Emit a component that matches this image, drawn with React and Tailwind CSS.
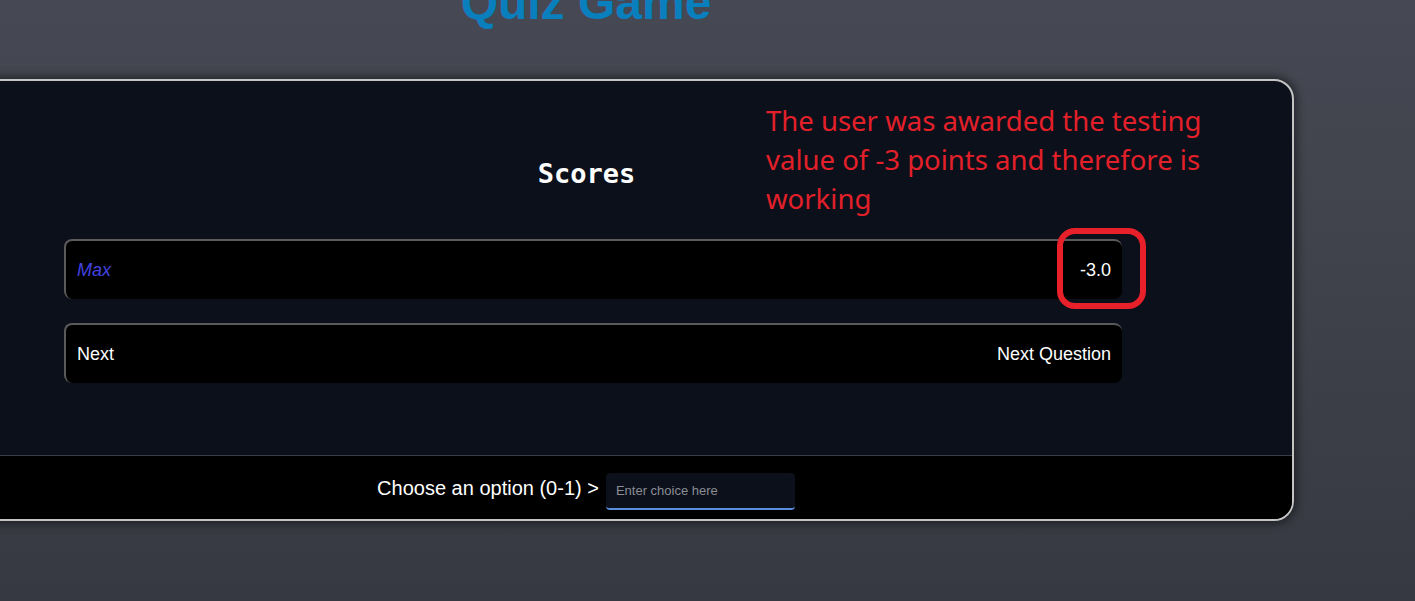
import React from 'react';

const App = () => {
    return (
        <div className="relative w-[1415px] h-[601px] overflow-hidden bg-gradient-to-b from-[#464953] to-[#373942]">
            {/* Title */}
            <h1 className="mt-[-21px] ml-[-122px] w-[1416px] text-center text-[48px] leading-[48px] font-bold text-[#0a7fbe] font-['Liberation_Sans',Arial,sans-serif]">
                Quiz Game
            </h1>

            {/* Main panel */}
            <div className="mt-[52px] ml-[-122px] w-[1416px] h-[442px] flex flex-col rounded-[20px] border-2 border-[#c4c4c4] bg-[#0c101b] shadow-[0_0_8px_3px_rgba(0,0,0,0.45)] overflow-hidden">
                <div className="flex-1 flex flex-col pl-[184px] pr-[170px]">
                    <h2 className="mt-[78px] text-center text-[27px] leading-[30px] font-bold text-white font-['DejaVu_Sans_Mono',monospace]">
                        <span className="ml-[-13px]">Scores</span>
                    </h2>
                    <div className="mt-[50px] flex flex-col gap-[24px] font-['Liberation_Sans',Arial,sans-serif] text-[18px]">
                        <div className="h-[60px] flex items-center justify-between px-[11px] bg-black rounded-[8px] border-t-2 border-l-2 border-[#5a5a5a]">
                            <span className="italic text-[#4343e0]">Max</span>
                            <span className="text-white">-3.0</span>
                        </div>
                        <div className="h-[60px] flex items-center justify-between px-[11px] bg-black rounded-[8px] border-t-2 border-l-2 border-[#5a5a5a]">
                            <span className="text-white">Next</span>
                            <span className="text-white">Next Question</span>
                        </div>
                    </div>
                </div>

                {/* Input bar */}
                <div className="h-[64px] shrink-0 flex items-center justify-center gap-[7px] bg-black border-t border-[#3a3d48] font-['Liberation_Sans',Arial,sans-serif]">
                    <span className="text-white text-[20px]">Choose an option (0-1) &gt;</span>
                    <input
                        placeholder="Enter choice here"
                        className="mt-[8px] w-[189px] h-[37px] px-[10px] rounded-[4px] bg-[#0c101b] border-b-2 border-[#5a8fdc] text-[13px] text-white placeholder:text-[#8a8d94] outline-none"
                    />
                </div>
            </div>

            {/* Annotation overlay */}
            <p className="absolute left-[766px] top-[101px] w-[480px] text-[27.5px] leading-[39px] text-[#e3202a] font-['Noto_Sans',sans-serif]">
                The user was awarded the testing value of -3 points and therefore is working
            </p>
            <div className="absolute left-[1057px] top-[228px] w-[89px] h-[81px] rounded-[18px] border-[6px] border-[#e8202a]" />
        </div>
    );
};

export default App;
